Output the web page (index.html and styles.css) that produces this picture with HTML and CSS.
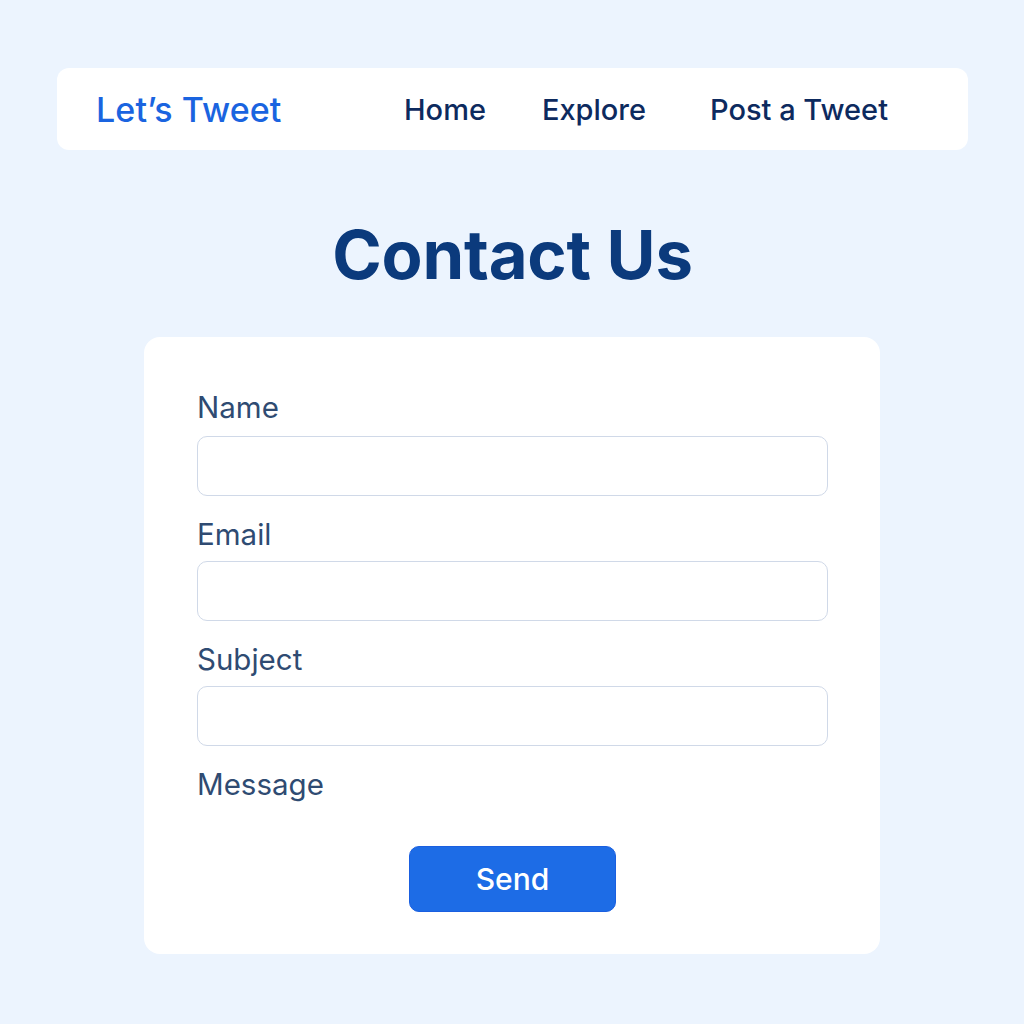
FILE: index.html
```html
<!DOCTYPE html>
<html lang="en">
<head>
<meta charset="utf-8">
<title>Contact Us - Let's Tweet</title>
<link rel="stylesheet" href="styles.css">
</head>
<body>
<div class="page">
  <header class="navbar">
    <a class="logo" href="#">Let’s Tweet</a>
    <nav class="nav">
      <a href="#" class="nav-home">Home</a>
      <a href="#" class="nav-explore">Explore</a>
      <a href="#" class="nav-post">Post a Tweet</a>
    </nav>
  </header>
  <h1 class="title">Contact Us</h1>
  <form class="card">
    <label class="label label-first" for="name">Name</label>
    <input class="field" id="name" type="text">
    <label class="label" for="email">Email</label>
    <input class="field" id="email" type="email">
    <label class="label" for="subject">Subject</label>
    <input class="field" id="subject" type="text">
    <label class="label" for="message">Message</label>
    <div class="actions">
      <button type="button" class="send">Send</button>
    </div>
  </form>
</div>
</body>
</html>
```
FILE: styles.css
```css
* { box-sizing: border-box; }
html, body {
  margin: 0;
  padding: 0;
  background: #ecf4fe;
  font-family: "Inter", "Noto Sans", sans-serif;
}
.page {
  width: 1024px;
  min-height: 1024px;
  padding: 68px 56px 0 57px;
  display: flex;
  flex-direction: column;
  align-items: center;
}
.navbar {
  width: 911px;
  height: 82px;
  background: #ffffff;
  border-radius: 12px;
  display: flex;
  align-items: center;
  padding: 0 80px 0 39px;
}
.logo {
  color: #1a64e0;
  font-size: 34px;
  font-weight: 500;
  text-decoration: none;
  letter-spacing: 0.1px;
}
.nav {
  margin-left: auto;
  display: flex;
  align-items: center;
}
.nav a {
  color: #0d2a5e;
  font-size: 29px;
  font-weight: 500;
  text-decoration: none;
}
.nav-explore { margin-left: 56px; }
.nav-post { margin-left: 64px; }
.title {
  margin: 65px 0 0;
  color: #0b3a7c;
  font-size: 67px;
  font-weight: 700;
  line-height: 80px;
  letter-spacing: -0.2px;
}
.card {
  margin-top: 42px;
  margin-left: -1px;
  width: 736px;
  background: #ffffff;
  border-radius: 16px;
  padding: 53px 52px 42px 53px;
  display: flex;
  flex-direction: column;
}
.label {
  color: #2f4b72;
  font-size: 29.5px;
  line-height: 34px;
  margin-top: 21px;
  margin-bottom: 10px;
}
.label-first { margin-top: 0; margin-bottom: 12px; }
.field {
  width: 631px;
  height: 60px;
  border: 1.5px solid #d0d9e8;
  border-radius: 10px;
  background: #ffffff;
  font: inherit;
}
.actions {
  margin-top: 35px;
  display: flex;
  justify-content: center;
}
.send {
  width: 207px;
  height: 66px;
  background: #1d6ce6;
  border: 1px solid #1a5fe0;
  border-radius: 10px;
  color: #ffffff;
  font-family: "Inter", "Noto Sans", sans-serif;
  font-size: 30px;
  font-weight: 500;
}
```
